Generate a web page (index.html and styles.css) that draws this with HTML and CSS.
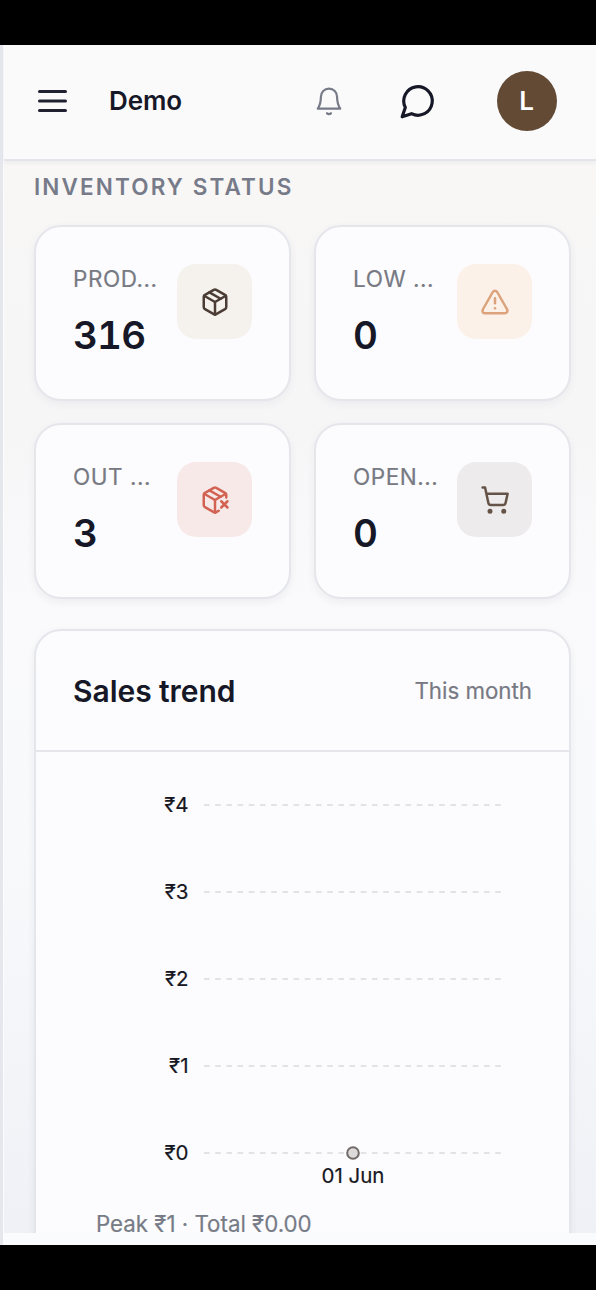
FILE: index.html
```html
<!DOCTYPE html>
<html lang="en">
<head>
<meta charset="utf-8">
<title>Demo</title>
<link rel="stylesheet" href="styles.css">
</head>
<body>
<div class="screen">
  <header class="topbar">
    <svg class="menu" viewBox="0 0 29 24"><path d="M1.500 2.500h26M1.500 12h26M1.500 21.500h26"/></svg>
    <span class="brand">Demo</span>
    <svg class="bell" viewBox="0 0 26 30"><path d="M4.900 11C4.900 6 8.400 2.700 13 2.700S21.100 6 21.100 11c0 5.500 1.300 8.800 3.100 11.700H1.800C3.600 19.800 4.900 16.500 4.900 11z"/><path d="M11 27.200c1 1.100 3 1.100 4 0"/></svg>
    <svg class="chat" viewBox="0 0 24 24"><path d="M7.900 20A9 9 0 1 0 4 16.100L2 22Z"/></svg>
    <span class="avatar">L</span>
  </header>
  <main class="content">
    <h2 class="section-title">INVENTORY STATUS</h2>
    <section class="stats">
      <article class="card stat">
        <div><div class="label">PROD...</div><div class="value">316</div></div>
        <span class="tile sand"><svg class="icon" viewBox="0 0 24 24"><path d="M11 21.730a2 2 0 0 0 2 0l7-4A2 2 0 0 0 21 16V8a2 2 0 0 0-1-1.730l-7-4a2 2 0 0 0-2 0l-7 4A2 2 0 0 0 3 8v8a2 2 0 0 0 1 1.730z"/><path d="M12 22V12"/><path d="M3.300 7 12 12l8.700-5"/><path d="m7.500 4.270 9 5.150"/></svg></span>
      </article>
      <article class="card stat">
        <div><div class="label">LOW ...</div><div class="value">0</div></div>
        <span class="tile peach"><svg class="icon" viewBox="0 0 24 24"><path d="m21.730 18-8-14a2 2 0 0 0-3.480 0l-8 14A2 2 0 0 0 4 21h16a2 2 0 0 0 1.730-3"/><path d="M12 9v4"/><path d="M12 17h.01"/></svg></span>
      </article>
      <article class="card stat">
        <div><div class="label">OUT ...</div><div class="value">3</div></div>
        <span class="tile rose"><svg class="icon" viewBox="0 0 24 24"><path d="M21 10V8a2 2 0 0 0-1-1.730l-7-4a2 2 0 0 0-2 0l-7 4A2 2 0 0 0 3 8v8a2 2 0 0 0 1 1.730l7 4a2 2 0 0 0 2 0l2-1.140"/><path d="m7.500 4.270 9 5.150"/><path d="M3.290 7 12 12l8.710-5"/><path d="M12 22V12"/><path d="m17 13 5 5m-5 0 5-5"/></svg></span>
      </article>
      <article class="card stat">
        <div><div class="label">OPEN...</div><div class="value">0</div></div>
        <span class="tile gray"><svg class="icon" viewBox="0 0 24 24"><circle cx="8" cy="21" r="1"/><circle cx="19" cy="21" r="1"/><path d="M2.050 2.050h2l2.660 12.420a2 2 0 0 0 2 1.580h9.780a2 2 0 0 0 1.950-1.570l1.650-7.430H5.120"/></svg></span>
      </article>
    </section>
    <section class="card trend">
      <div class="trend-head"><h3>Sales trend</h3><span>This month</span></div>
      <svg class="chart" viewBox="0 0 534 450">
        <g class="grid"><path d="M168 53H465"/><path d="M168 140H465"/><path d="M168 227H465"/><path d="M168 314H465"/><path d="M168 401H465"/></g>
        <g class="ticks"><text x="152.500" y="60.300">₹4</text><text x="152.500" y="147.300">₹3</text><text x="152.500" y="234.300">₹2</text><text x="152.500" y="321.300">₹1</text><text x="152.500" y="408.300">₹0</text></g>
        <circle class="point" cx="317" cy="401" r="5.800"/>
        <text class="date" x="317" y="431">01 Jun</text>
      </svg>
      <p class="summary">Peak ₹1 · Total ₹0.00</p>
    </section>
  </main>
  <div class="safe-area"></div>
</div>
</body>
</html>
```
FILE: styles.css
```css
* { box-sizing: border-box; }
body { margin: 0; background: #000; font-family: Inter, "Noto Sans", sans-serif; color: #161827; }
h2, h3, p { margin: 0; }
svg { display: block; fill: none; stroke: currentColor; stroke-linecap: round; stroke-linejoin: round; flex: none; }
.screen { height: 1290px; border-top: 45px solid #000; border-bottom: 45px solid #000; display: flex; flex-direction: column; background: #fafbfd; box-shadow: inset 3px 0 #e6e7ec; overflow: hidden; }
.topbar { height: 116px; flex: none; margin-left: 4px; padding: 0 39.500px 3px 34px; display: flex; align-items: center; background: #fafafb; border-bottom: 2px solid #e4e5ea; box-shadow: 0 2px 4px rgba(30, 30, 50, .05); position: relative; }
.menu { width: 29px; height: 24px; stroke-width: 3; color: #1f2030; }
.brand { font-size: 26px; font-weight: 600; margin-left: 42px; flex: 1; letter-spacing: -.1px; }
.bell { width: 26px; height: 30px; stroke-width: 2.200; color: #777b88; margin-right: 57.500px; }
.chat { width: 38px; height: 38px; stroke-width: 2; margin-right: 59.500px; }
.avatar { width: 60px; height: 60px; border-radius: 50%; background: #624a35; color: #fff; display: grid; place-items: center; font-size: 26px; font-weight: 600; }
.content { height: 1072px; flex: none; margin-left: 4px; padding: 14px 25px 0 30px; overflow: hidden; background: linear-gradient(#f8f7f6 0, #f7f6f7 25%, #fafafc 43%, #f8f9fb 65%, #f0f1f6 100%); }
.section-title { font-size: 22.500px; line-height: 24px; font-weight: 600; color: #777b89; letter-spacing: 2.120px; white-space: nowrap; }
.stats { display: grid; grid-template-columns: 1fr 1fr; gap: 22px 23px; margin-top: 26px; }
.card { background: #fcfcfe; border: 2px solid #e5e6ec; border-radius: 27px; box-shadow: 0 3px 9px rgba(40, 40, 70, .06); }
.stat { height: 176px; padding: 36px 37px 0; display: flex; justify-content: space-between; white-space: nowrap; }
.label { font-size: 22.500px; line-height: 32px; color: #777983; letter-spacing: .55px; -webkit-text-stroke: .2px; }
.value { font-size: 38.500px; line-height: 48px; margin-top: 16px; font-weight: 600; font-variant-numeric: tabular-nums; letter-spacing: -.8px; }
.tile { width: 75px; height: 75px; margin-top: 1px; border-radius: 19px; display: grid; place-items: center; flex: none; }
.icon { width: 30px; height: 30px; stroke-width: 2; }
.sand { background: #f5f2ee; color: #4b3d35; }
.peach { background: #fcf1e8; color: #dba27b; }
.rose { background: #f8e9e9; color: #d26353; }
.gray { background: #edebec; color: #655348; }
.trend { height: 640px; margin-top: 30px; }
.trend-head { height: 121px; padding: 0 37px; border-bottom: 2px solid #e5e6ec; display: flex; align-items: center; justify-content: space-between; }
.trend-head h3 { font-size: 30px; font-weight: 600; letter-spacing: -.05px; }
.trend-head span { font-size: 22.300px; color: #777983; -webkit-text-stroke: .2px; }
.chart { width: 534px; height: 450px; }
.grid { stroke: #e2e3e6; stroke-width: 2; stroke-linecap: butt; stroke-dasharray: 5.600 5.600; }
.chart text { stroke: #161722; stroke-width: .2px; fill: #161722; font-size: 20.500px; }
.ticks { text-anchor: end; }
.chart .date { text-anchor: middle; }
.point { fill: #dedada; stroke: #716a68; stroke-width: 2; }
.summary { font-size: 22.300px; line-height: 28px; margin: 7.500px 0 0 60px; color: #777b86; -webkit-text-stroke: .2px; }
.safe-area { flex: 1; margin-left: 3px; background: #fafbfd; }
```
